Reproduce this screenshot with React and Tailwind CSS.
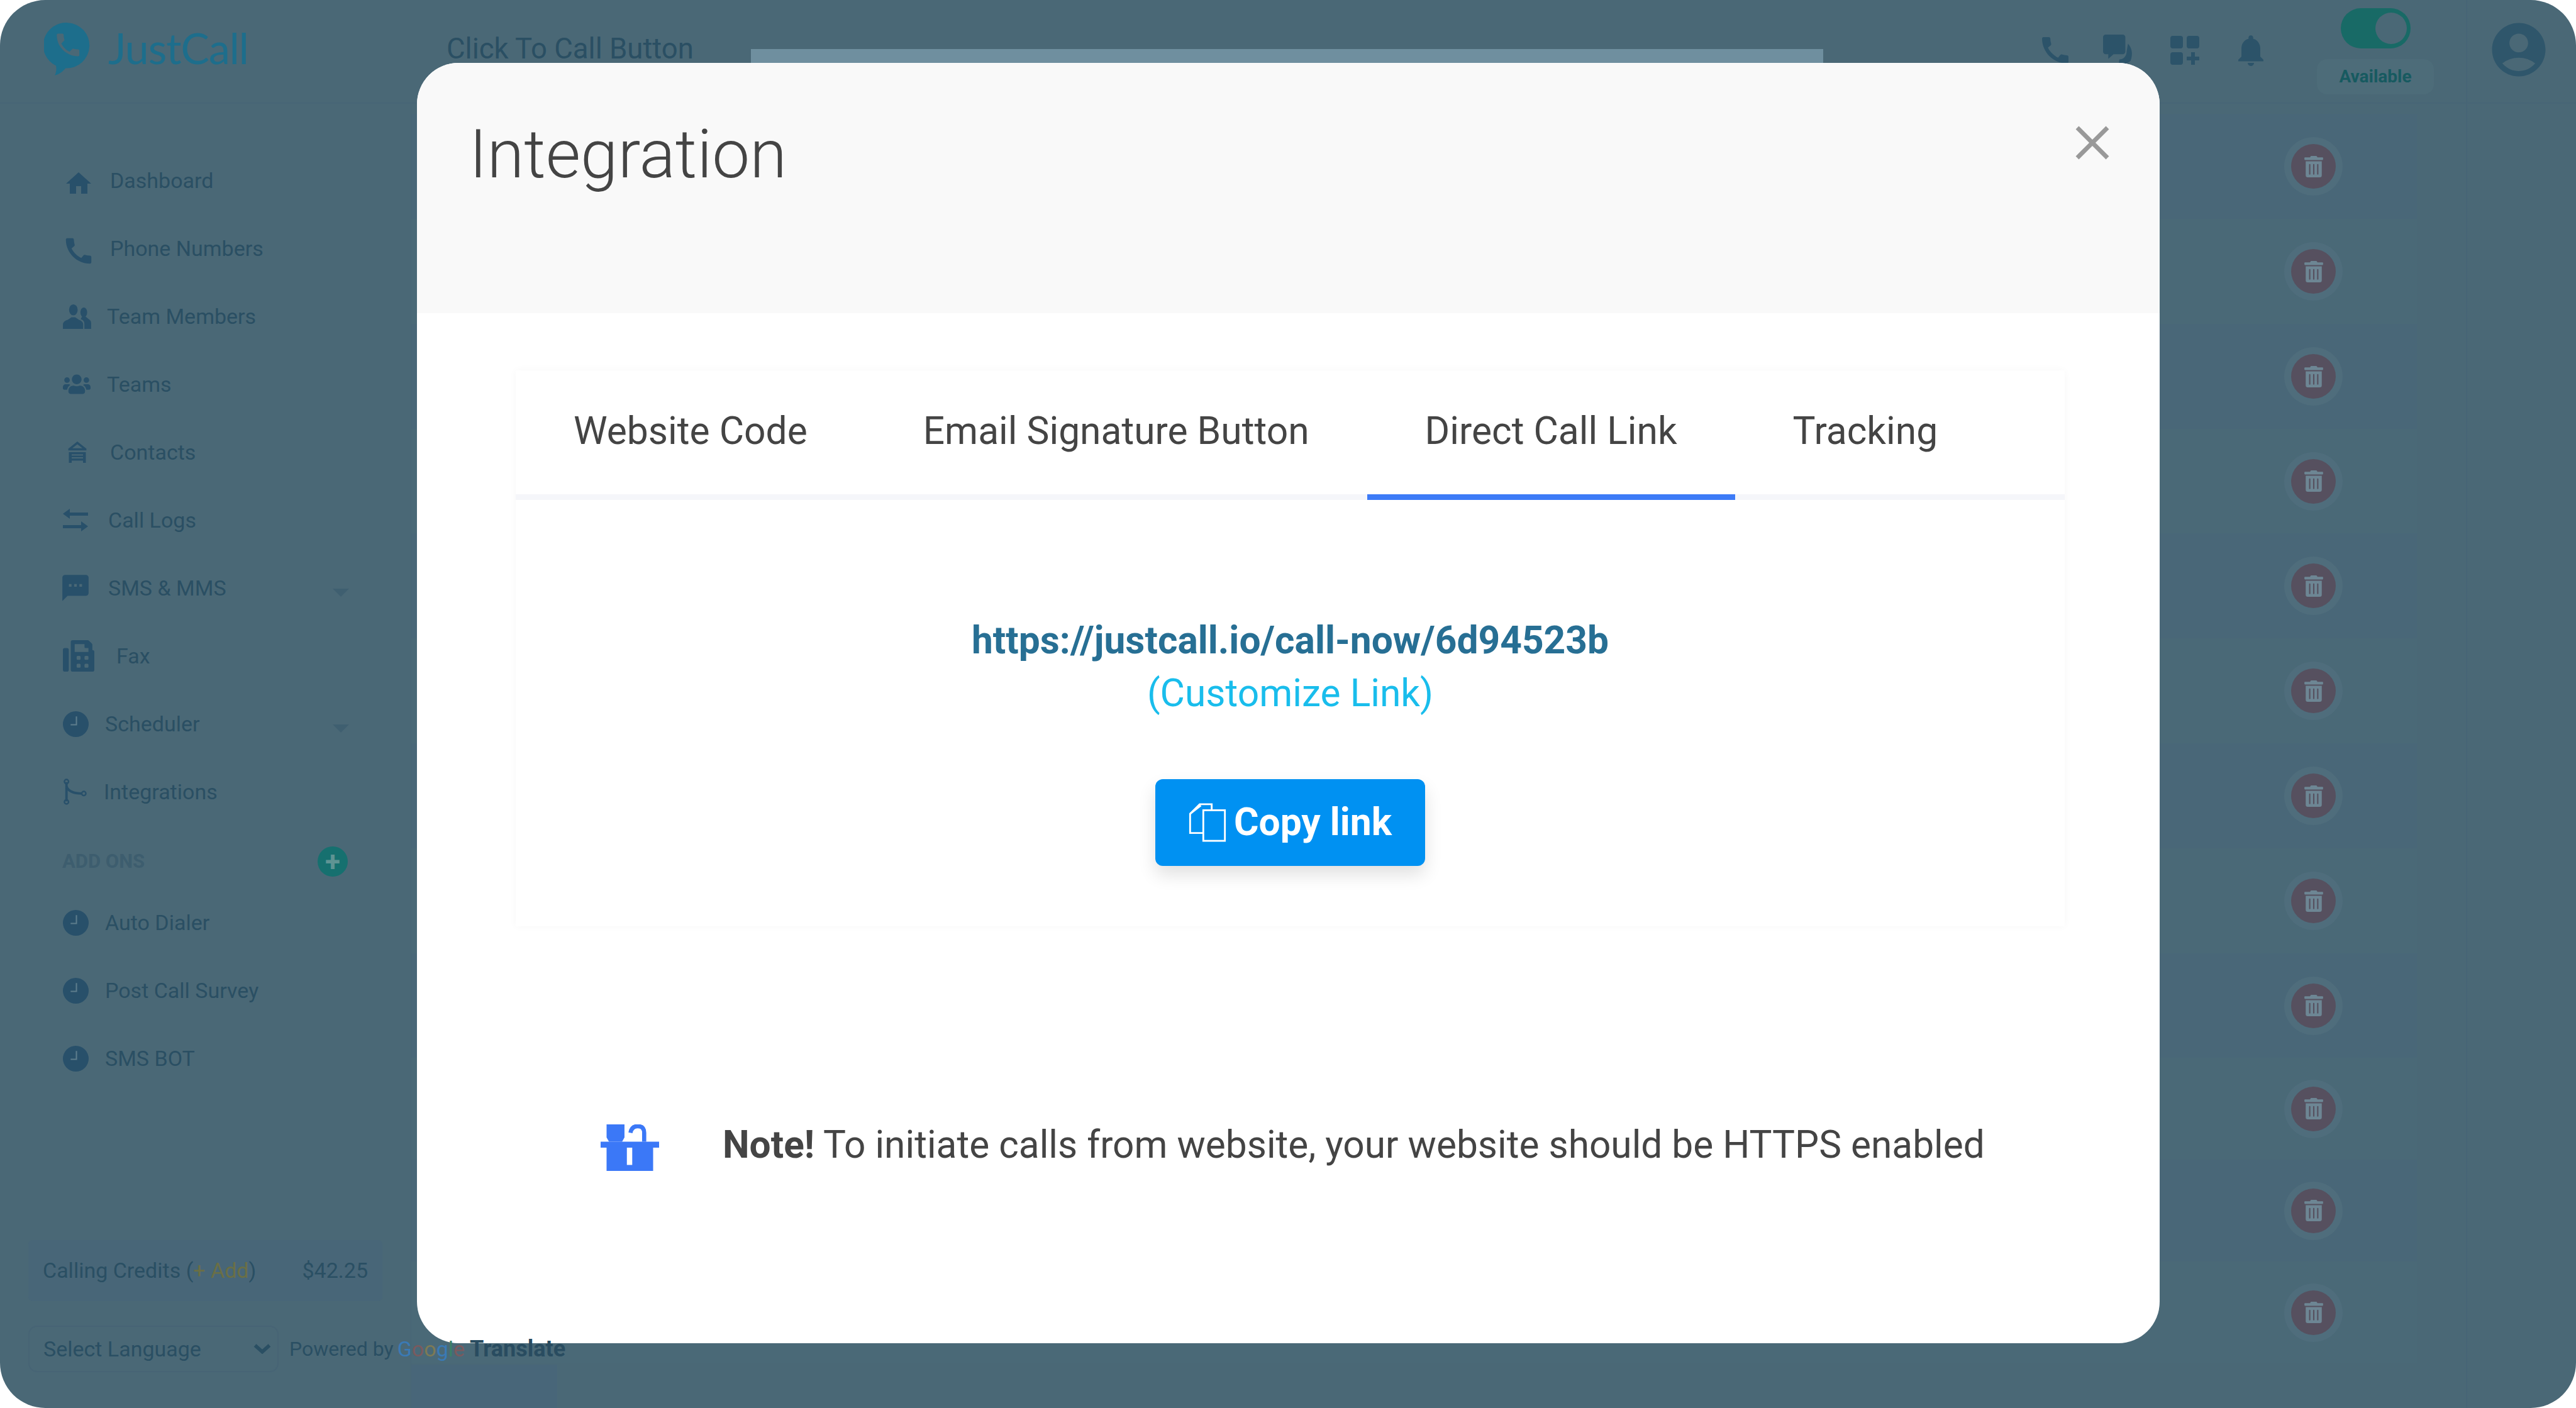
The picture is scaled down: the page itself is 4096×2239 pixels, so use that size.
import { FaFax, FaTrashAlt, FaUsers } from "react-icons/fa";
import { MdAccountCircle, MdCall, MdHome, MdNotifications, MdSms } from "react-icons/md";

const ContactsIcon = () => (
  <svg viewBox="0 0 40 40" className="flex-none w-[36px] h-[36px]" fill="currentColor">
    <path d="M20 1 L36 14 V17 H4 V14 Z M20 6 L11 13 H29 Z" fillRule="evenodd" />
    <path d="M5 20 H35 V39 H30 V35 H10 V39 H5 Z M10 24 V31 H30 V24 Z" fillRule="evenodd" />
    <rect x="10" y="26" width="20" height="3" />
  </svg>
);

const IntegrationsIcon = () => (
  <svg viewBox="0 0 40 44" className="flex-none w-[38px] h-[44px]" fill="none" stroke="currentColor">
    <path d="M6 6 V38" strokeWidth="4" />
    <path d="M6 13 Q10 25 32 25" strokeWidth="4" />
    <circle cx="6" cy="5" r="3.5" strokeWidth="2.5" />
    <circle cx="6" cy="39" r="3.5" strokeWidth="2.5" />
    <circle cx="35" cy="25" r="3.5" strokeWidth="2.5" />
  </svg>
);

const MembersIcon = () => (
  <svg viewBox="0 0 46 40" className="flex-none w-[45px] h-[39px]" fill="currentColor">
    <ellipse cx="17" cy="9" rx="7" ry="9" />
    <path d="M0 40 V33 Q0 27 8 25 L14 21 H20 L26 25 Q33 27 33 33 V40 Z" />
    <ellipse cx="34" cy="13" rx="5.5" ry="8" />
    <path d="M35 40 V32 Q35 26 29 24 L31 20 H37 L42 24 Q46 26 46 31 V40 Z" />
  </svg>
);

const LogsIcon = () => (
  <svg viewBox="0 0 40 36" className="flex-none w-[40px] h-[36px]" fill="currentColor">
    <path d="M11 0 L0 8 L11 16 V11 H40 V6 H11 Z" />
    <path d="M29 20 L40 28 L29 36 V31 H0 V26 H29 Z" />
  </svg>
);

const ClockIcon = () => (
  <svg viewBox="0 0 40 40" className="flex-none w-[41px] h-[41px]">
    <circle cx="20" cy="20" r="20" fill="currentColor" />
    <path d="M21 8 V21 H12" fill="none" stroke="#5d7d8c" strokeWidth="2" />
  </svg>
);

const navTop = [
  { label: "Dashboard", icon: <MdHome className="flex-none w-[48px] h-[48px] ml-[1px] mt-[10px]" />, w: "w-[75px]" },
  { label: "Phone Numbers", icon: <MdCall className="flex-none w-[54px] h-[54px] -ml-[2px] mt-[8px]" />, w: "w-[75px]" },
  { label: "Team Members", icon: <MembersIcon />, w: "w-[70px]" },
  { label: "Teams", icon: <FaUsers className="flex-none w-[44px] h-[44px]" />, w: "w-[70px]" },
  { label: "Contacts", icon: <ContactsIcon />, w: "w-[75px]", inset: "pl-[5px]" },
  { label: "Call Logs", icon: <LogsIcon />, w: "w-[72px]" },
  { label: "SMS & MMS", icon: <MdSms className="flex-none w-[50px] h-[50px] -ml-[5px]" />, w: "w-[72px]", drop: true },
  { label: "Fax", icon: <FaFax className="flex-none w-[50px] h-[50px]" />, w: "w-[85px]" },
  { label: "Scheduler", icon: <ClockIcon />, w: "w-[67px]", drop: true },
  { label: "Integrations", icon: <IntegrationsIcon />, w: "w-[65px]" },
];

const navAddons = ["Auto Dialer", "Post Call Survey", "SMS BOT"];

const rows = [
  { h: "h-[167px]", bg: "bg-[#496778]" },
  { h: "h-[167px]", bg: "bg-[#4a6977]" },
  { h: "h-[167px]", bg: "bg-[#496778]" },
  { h: "h-[166px]", bg: "bg-[#4a6977]" },
  { h: "h-[167px]", bg: "bg-[#496778]" },
  { h: "h-[167px]", bg: "bg-[#4a6977]" },
  { h: "h-[167px]", bg: "bg-[#496778]" },
  { h: "h-[167px]", bg: "bg-[#4a6977]" },
  { h: "h-[166px]", bg: "bg-[#496778]" },
  { h: "h-[162px]", bg: "bg-[#4a6977]" },
  { h: "h-[162px]", bg: "bg-[#496778]" },
  { h: "h-[162px]", bg: "bg-[#4a6977]" },
];

const tabs = ["Website Code", "Email Signature Button", "Direct Call Link", "Tracking"];

const NavRow = ({ item }) => (
  <div className={`relative flex items-center h-[108px] pl-[100px]`}>
    <span className={`flex-none flex items-center ${item.w} ${item.inset || ""} text-[#28506a]`}>{item.icon}</span>
    <span className="text-[34px] text-[#2a4f63] whitespace-nowrap">{item.label}</span>
    {item.drop && (
      <span className="absolute left-[529px] top-[55px] w-0 h-0 border-x-[13px] border-x-transparent border-t-[13px] border-t-[#3f5f70]" />
    )}
  </div>
);

const Sidebar = () => (
  <div className="flex-none w-[654px] flex flex-col pt-[68px] border-r border-[#476576]">
    {navTop.map((item) => (
      <NavRow key={item.label} item={item} />
    ))}
    <div className="flex items-center justify-between h-[100px] pt-[14px] pl-[99px] pr-[100px]">
      <span className="text-[31px] font-bold text-[#3d5d6e]">ADD ONS</span>
      <span className="flex items-center justify-center w-[48px] h-[48px] rounded-full bg-[#16706f] text-[#5f9393] text-[44px] font-bold leading-none">+</span>
    </div>
    {navAddons.map((label) => (
      <NavRow key={label} item={{ label, icon: <ClockIcon />, w: "w-[67px]" }} />
    ))}
    <div className="mt-auto ml-[45px] w-[563px] h-[97px] flex items-center justify-between px-[23px] rounded-[6px] bg-[#486678] text-[34px] text-[#2a4f63]">
      <span className="whitespace-nowrap">
        Calling Credits (<span className="text-[#6a6f45]">+ Add</span>)
      </span>
      <span>$42.25</span>
    </div>
    <div className="relative z-10 flex items-center mt-[39px] mb-[57px] ml-[45px] whitespace-nowrap">
      <div className="flex-none flex items-center justify-between w-[398px] h-[74px] pl-[22px] pr-[10px] rounded-[14px] border-2 border-[#476475] text-[34px] text-[#2a4f63]">
        Select Language
        <svg viewBox="0 0 24 14" className="w-[28px] h-[16px]" fill="none" stroke="currentColor" strokeWidth="5">
          <path d="M2 2 L12 11 L22 2" />
        </svg>
      </div>
      <span className="ml-[17px] text-[32px] text-[#2a4f63]">Powered by</span>
      <span className="ml-[6px] text-[34px]">
        <span className="text-[#3a7ab5]">G</span>
        <span className="text-[#7a5a5e]">o</span>
        <span className="text-[#7d7a55]">o</span>
        <span className="text-[#3a7ab5]">g</span>
        <span className="text-[#3a8068]">l</span>
        <span className="text-[#7a5a5e]">e</span>
      </span>
      <span className="ml-[8px] text-[36px] font-bold text-[#294c60]">Translate</span>
    </div>
  </div>
);

const Header = () => (
  <div className="flex-none flex h-[165px] border-b-2 border-[#476576]">
    <div className="flex-none w-[654px] flex items-start pl-[70px] pt-[34px] text-[#1d6e8c]">
      <svg viewBox="0 0 80 92" className="flex-none w-[76px] h-[88px]">
        <path fill="currentColor" d="M40 2 A38 38 0 1 1 36 78 C32 83 26 88 18 90 C21 84 21 78 20 74 A38 38 0 0 1 40 2 Z" />
        <g transform="translate(15 14) scale(2.1)">
          <path fill="#4a6876" d="M6.62 10.79c1.44 2.83 3.76 5.14 6.59 6.59l2.2-2.2c.27-.27.67-.36 1.02-.24 1.12.37 2.33.57 3.57.57.55 0 1 .45 1 1V20c0 .55-.45 1-1 1-9.39 0-17-7.61-17-17 0-.55.45-1 1-1h3.5c.55 0 1 .45 1 1 0 1.25.2 2.45.57 3.57.11.35.03.74-.25 1.02l-2.2 2.2z" />
        </g>
      </svg>
      <span className="ml-[26px] mt-[8px] text-[68px] leading-none tracking-[-1px] [font-family:Lato,sans-serif]">JustCall</span>
    </div>
    <div className="flex-none w-[540px] pl-[56px] pt-[52px] text-[45.5px] leading-[52px] text-[#2a4f63] whitespace-nowrap">Click To Call Button</div>
    <div className="flex-none self-end w-[1705px] h-[85px] bg-[#6f8f9f]" />
    <div className="flex-none flex items-center self-start mt-[50px] ml-[341px] text-[#2c5369]">
      <MdCall className="flex-none w-[56px] h-[56px]" />
      <svg viewBox="0 0 48 48" className="flex-none ml-[48px] w-[50px] h-[50px]" fill="currentColor">
        <path d="M4 0 H30 a4 4 0 0 1 4 4 V26 a4 4 0 0 1 -4 4 H16 L8 37 V30 H4 a4 4 0 0 1 -4 -4 V4 a4 4 0 0 1 4 -4 Z" />
        <path d="M38 14 C44 20 46 30 42 40 C38 44 30 46 24 44 L25 38 C32 38 36 32 36 26 Z" />
      </svg>
      <svg viewBox="0 0 46 46" className="flex-none ml-[57px] w-[46px] h-[46px]" fill="currentColor">
        <rect x="0" y="0" width="20" height="20" rx="4" />
        <rect x="26" y="0" width="20" height="20" rx="4" />
        <rect x="0" y="26" width="20" height="20" rx="4" />
        <path d="M33 26 H39 V33 H46 V39 H39 V46 H33 V39 H26 V33 H33 Z" />
      </svg>
      <MdNotifications className="flex-none ml-[52px] w-[60px] h-[60px]" />
    </div>
    <div className="flex-none flex flex-col items-center self-start mt-[13px] ml-[75px] w-[186px]">
      <div className="flex items-center justify-end w-[111px] h-[64px] pr-[6px] rounded-full bg-[#186a66]">
        <span className="w-[50px] h-[50px] rounded-full bg-[#4a6876]" />
      </div>
      <div className="flex items-center justify-center mt-[17px] w-[186px] h-[56px] rounded-[16px] bg-[#4d6c79] text-[28px] font-bold text-[#175a60]">Available</div>
    </div>
    <div className="flex-1 ml-[51px] pl-[31px] pt-[28px] border-l-2 border-[#476576]">
      <MdAccountCircle className="w-[102px] h-[102px] text-[#2f566b]" />
    </div>
  </div>
);

const App = () => (
  <div className="w-[4096px] h-[2239px] bg-white overflow-hidden [font-family:Roboto,sans-serif]">
    <div className="relative w-full h-full flex flex-col rounded-[72px] overflow-hidden bg-[#4a6876]">
      <Header />
      <div className="flex-1 flex min-h-0">
        <Sidebar />
        <div className="flex-none w-[3267px] flex flex-col pt-[16px]">
          {rows.map((row, i) => (
            <div key={i} className={`flex-none flex items-center justify-end w-[3189px] pr-[118px] ${row.h} ${row.bg}`}>
              <span className="flex items-center justify-center w-[93px] h-[93px] rounded-full bg-[#4f6d7c]">
                <span className="flex items-center justify-center w-[71px] h-[71px] rounded-full bg-[#56505f] text-[#6d8694]">
                  <FaTrashAlt className="w-[30px] h-[34px]" />
                </span>
              </span>
            </div>
          ))}
          <div className="mt-auto w-[232px] h-[69px] bg-[#486679]" />
        </div>
        <div className="flex-1 border-l-2 border-[#476576]" />
      </div>

      {/* modal */}
      <div className="absolute left-[663px] top-[100px] w-[2771px] h-[2036px] flex flex-col rounded-[66px] overflow-hidden bg-white text-[#444444]">
        <div className="flex-none relative h-[398px] bg-[#f9f9f9] pl-[83px] pt-[76px]">
          <div className="text-[107px] font-light leading-[140px]">Integration</div>
          <svg viewBox="0 0 54 54" className="absolute left-[2637px] top-[100px] w-[54px] h-[54px] text-[#999999]" stroke="currentColor" strokeWidth="7">
            <path d="M3 3 L51 51 M51 3 L3 51" />
          </svg>
        </div>
        <div className="flex-1 flex flex-col pl-[157px] pr-[151px] pt-[91px]">
          <div className="h-[884px] flex flex-col shadow-[0_0_12px_rgba(0,0,0,0.035)]">
            <div className="flex-none flex h-[206px] border-b-[9px] border-[#f5f6fa]">
              {tabs.map((tab) => (
                <div
                  key={tab}
                  className={`h-[206px] px-[92px] pt-[57px] text-[60.5px] leading-[80px] whitespace-nowrap ${tab === "Direct Call Link" ? "border-b-[9px] border-[#3d7bf7]" : ""}`}
                >
                  {tab}
                </div>
              ))}
            </div>
            <div className="flex flex-col items-center pt-[182px]">
              <div className="text-[60.5px] font-bold leading-[84px] text-[#276f94]">https://justcall.io/call-now/6d94523b</div>
              <div className="text-[60.5px] leading-[84px] text-[#19bdec]">(Customize Link)</div>
              <button className="flex items-center justify-center gap-[12px] mt-[94px] w-[429px] h-[138px] rounded-[12px] bg-[#0091f2] text-[60.5px] font-bold text-white shadow-[0_14px_28px_rgba(0,0,0,0.12)]">
                <svg viewBox="0 0 62 65" className="w-[60px] h-[62px]" fill="none" stroke="currentColor" strokeWidth="3">
                  <path d="M24 50 H2 V18 L18 2 H38 V12" />
                  <path d="M2 18 L20 4" />
                  <rect x="24" y="12" width="36" height="51" />
                </svg>
                Copy link
              </button>
            </div>
          </div>
          <div className="flex items-center mt-[315px] ml-[135px]">
            <svg viewBox="0 0 98 78" className="flex-none w-[93px] h-[74px] text-[#3b78f7]" fill="currentColor" preserveAspectRatio="none">
              <path d="M0 29 H98 V39 H88 V78 H10 V39 H0 Z M44 39 V68 H53 V39 Z" fillRule="evenodd" />
              <path d="M10 0 H40 V22 L36 29 H14 L10 22 Z" />
              <path d="M50 14 Q52 3 62 3 Q73 3 73 14 V29" fill="none" stroke="currentColor" strokeWidth="7" />
            </svg>
            <div className="ml-[101px] -mt-[8px] text-[60.4px] leading-[80px] whitespace-nowrap">
              <span className="font-bold">Note!</span> To initiate calls from website, your website should be HTTPS enabled
            </div>
          </div>
        </div>
      </div>
    </div>
  </div>
);

export default App;
